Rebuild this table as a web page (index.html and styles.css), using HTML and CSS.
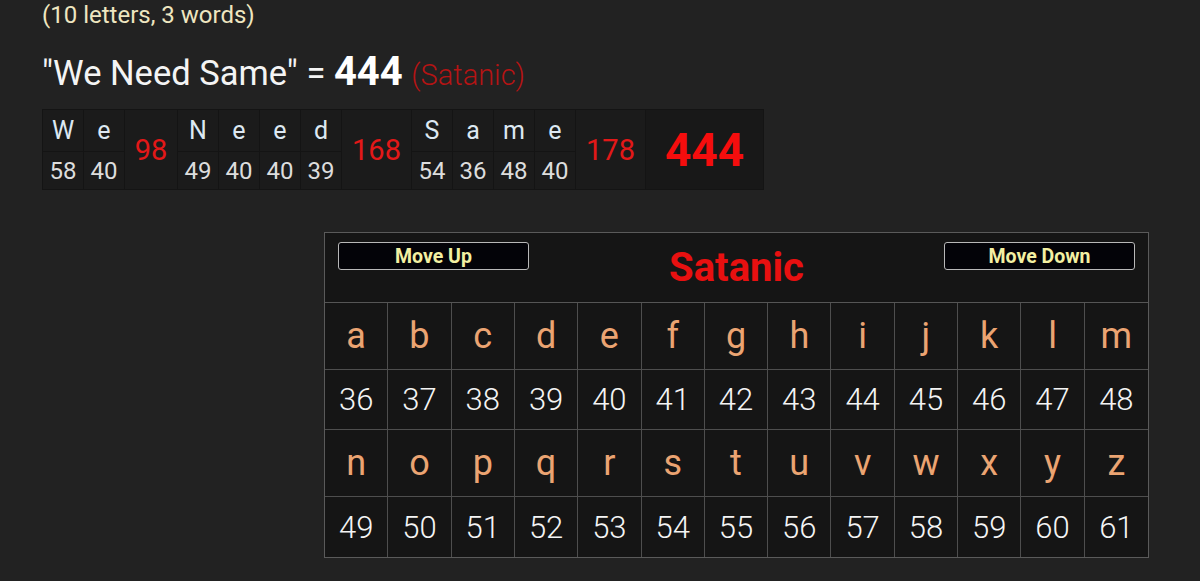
FILE: index.html
```html
<!DOCTYPE html>
<html lang="en">

<head>
    <meta charset="UTF-8">
    <meta name="viewport" content="width=device-width, initial-scale=1.0">
    <title>Gematria - We Need Same</title>
    <link rel="stylesheet" href="styles.css">
</head>

<body>
    <!-- Phrase summary -->
    <div class="summary">
        <div class="count">(10 letters, 3 words)</div>
        <div class="phrase">"We Need Same" = <b class="total">444</b> <span class="cipher-name">(Satanic)</span></div>

        <table class="breakdown">
            <tr>
                <td class="ch">W</td><td class="ch">e</td>
                <td class="word-sum w98" rowspan="2">98</td>
                <td class="ch">N</td><td class="ch">e</td><td class="ch">e</td><td class="ch">d</td>
                <td class="word-sum w168" rowspan="2">168</td>
                <td class="ch">S</td><td class="ch">a</td><td class="ch">m</td><td class="ch">e</td>
                <td class="word-sum w178" rowspan="2">178</td>
                <td class="grand" rowspan="2">444</td>
            </tr>
            <tr>
                <td class="num">58</td><td class="num">40</td>
                <td class="num">49</td><td class="num">40</td><td class="num">40</td><td class="num">39</td>
                <td class="num">54</td><td class="num">36</td><td class="num">48</td><td class="num">40</td>
            </tr>
        </table>
    </div>

    <!-- Cipher chart -->
    <div class="chart">
        <div class="chart-head">
            <button class="move-btn">Move Up</button>
            <h2 class="chart-title">Satanic</h2>
            <button class="move-btn">Move Down</button>
        </div>
        <div class="chart-grid" id="chart-grid"></div>
    </div>

    <script>
        const grid = document.getElementById('chart-grid');
        const letters = 'abcdefghijklmnopqrstuvwxyz';

        // two blocks of 13 letters, each followed by its values
        for (let block = 0; block < 2; block++) {
            const part = letters.slice(block * 13, block * 13 + 13).split('');
            part.forEach(l => {
                grid.innerHTML += `<div class="cell letter">${l}</div>`;
            });
            part.forEach(l => {
                grid.innerHTML += `<div class="cell value">${letters.indexOf(l) + 36}</div>`;
            });
        }
    </script>
</body>

</html>
```

FILE: styles.css
```css
/* Base styling */
body {
    margin: 0;
    padding: 0;
    background-color: #222;
    font-family: Roboto, 'Liberation Sans', sans-serif;
    color: #eee;
}

/* Phrase summary */
.summary {
    padding: 0 0 0 42px;
}

.count {
    font-size: 24px;
    line-height: 30px;
    color: #eee6c0;
}

.phrase {
    margin-top: 20px;
    font-size: 34.5px;
    line-height: 44px;
    color: #f4f4f4;
}

.total {
    font-size: 40px;
    font-weight: 700;
    color: #fff;
}

.cipher-name {
    font-size: 29px;
    font-weight: 300;
    color: #b51414;
}

/* Letter breakdown */
.breakdown {
    margin-top: 12px;
    border-collapse: separate;
    border-spacing: 1px;
    background-color: #141414;
}

.breakdown td {
    background-color: #1b1b1b;
    text-align: center;
    padding: 0;
}

.ch {
    width: 40px;
    height: 41px;
    font-size: 25px;
    color: #dde8f2;
}

.num {
    height: 37px;
    font-size: 24px;
    color: #ddd;
}

.word-sum {
    font-size: 29px;
    color: #e31818;
}

.w98 { width: 52px; }
.w168, .w178 { width: 69px; }

.grand {
    width: 117px;
    font-size: 46px;
    font-weight: 700;
    color: #f50d0d;
    background-color: #181818 !important;
}

/* Cipher chart */
.chart {
    width: 825px;
    box-sizing: border-box;
    margin: 42px 0 0 324px;
    border: 1px solid #5a5a5a;
    background-color: #151515;
}

.chart-head {
    display: flex;
    justify-content: space-between;
    align-items: flex-start;
    height: 70px;
    padding: 0 13px;
    border-bottom: 1px solid #555;
    box-sizing: border-box;
}

.move-btn {
    width: 191px;
    height: 28px;
    margin-top: 9px;
    padding: 0;
    background-color: #030308;
    border: 1px solid #b8b8b8;
    border-radius: 3px;
    font-family: Roboto, sans-serif;
    font-size: 19.5px;
    font-weight: 700;
    color: #f3f0a2;
    cursor: pointer;
}

.chart-title {
    margin: 11px 0 0;
    font-size: 40px;
    font-weight: 700;
    color: #e81010;
}

.chart-grid {
    display: grid;
    grid-template-columns: repeat(13, 1fr);
}

.cell {
    display: flex;
    align-items: center;
    justify-content: center;
    border-right: 1px solid #4e4e4e;
    border-bottom: 1px solid #4e4e4e;
}

.cell:nth-child(13n) {
    border-right: none;
}

.cell:nth-last-child(-n+13) {
    border-bottom: none;
}

.letter {
    height: 66px;
    font-size: 36px;
    color: #eba472;
}

.value {
    height: 59px;
    font-size: 31px;
    font-weight: 300;
    color: #f4f4f4;
}

.cell:nth-last-child(-n+13).value {
    height: 60px;
}
```
